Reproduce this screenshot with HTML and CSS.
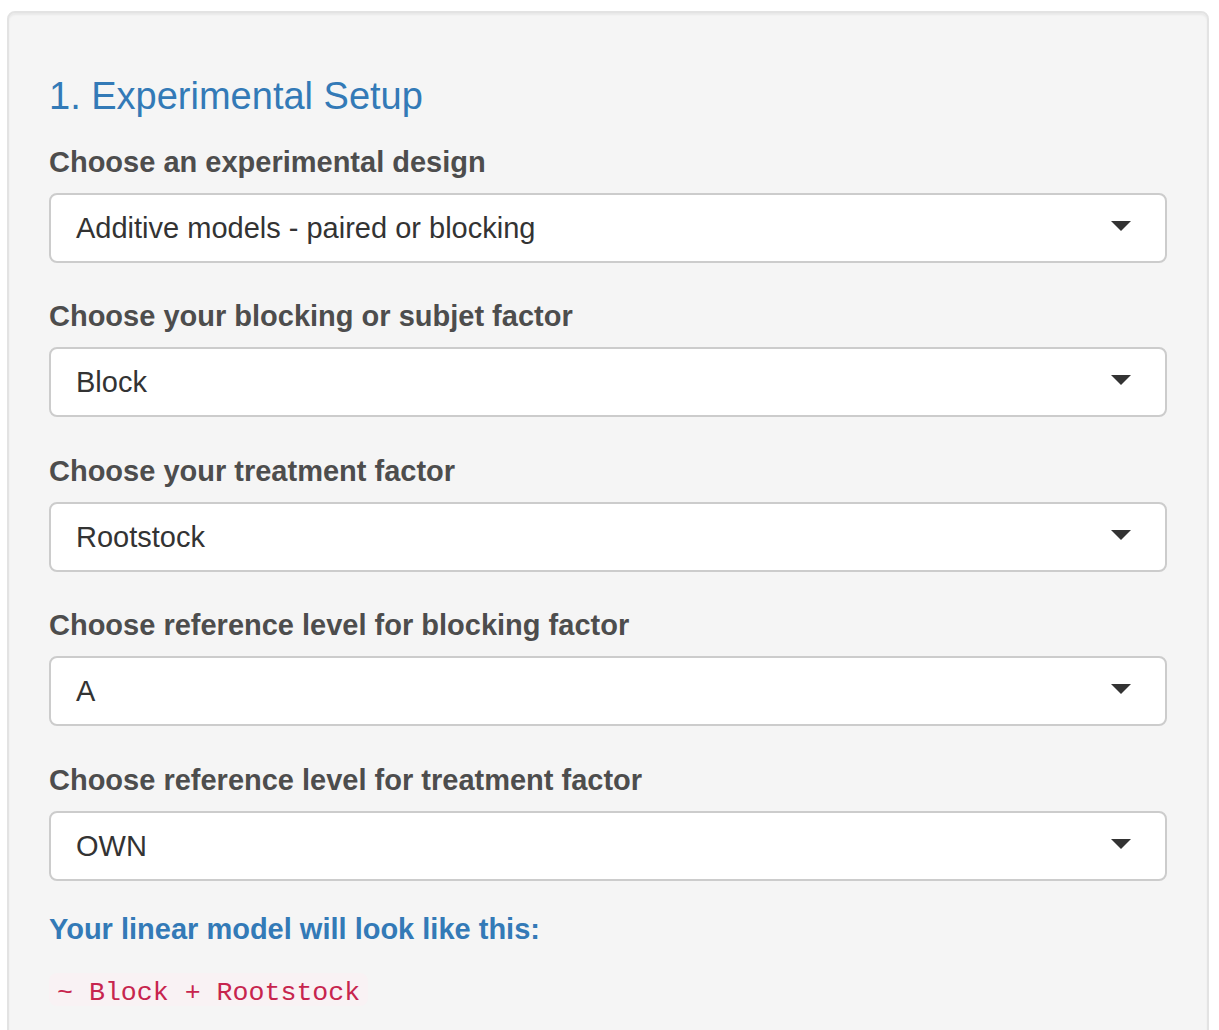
FILE: index.html
```html
<!DOCTYPE html>
<html lang="en">
<head>
<meta charset="utf-8">
<title>Experimental Setup</title>
<link rel="stylesheet" href="styles.css">
</head>
<body>
<div class="well">
  <h3 class="section-title">1. Experimental Setup</h3>
  <div class="form">
    <div class="group">
      <label class="label">Choose an experimental design</label>
      <div class="select"><span class="value">Additive models - paired or blocking</span><span class="caret"></span></div>
    </div>
    <div class="group">
      <label class="label">Choose your blocking or subjet factor</label>
      <div class="select"><span class="value">Block</span><span class="caret"></span></div>
    </div>
    <div class="group">
      <label class="label">Choose your treatment factor</label>
      <div class="select"><span class="value">Rootstock</span><span class="caret"></span></div>
    </div>
    <div class="group">
      <label class="label">Choose reference level for blocking factor</label>
      <div class="select"><span class="value">A</span><span class="caret"></span></div>
    </div>
    <div class="group">
      <label class="label">Choose reference level for treatment factor</label>
      <div class="select"><span class="value">OWN</span><span class="caret"></span></div>
    </div>
  </div>
  <div class="model-title">Your linear model will look like this:</div>
  <div class="model-line"><code class="formula">~ Block + Rootstock</code></div>
</div>
</body>
</html>
```

FILE: styles.css
```css
html, body {
  margin: 0;
  padding: 0;
  background: #ffffff;
}

body {
  padding: 11px 10px 0 7px;
  font-family: "Liberation Sans", Arial, Helvetica, sans-serif;
  color: #333333;
}

.well {
  background: #f5f5f5;
  border: 2px solid #e3e3e3;
  border-radius: 8px;
  box-shadow: inset 0 2px 2px rgba(0, 0, 0, 0.05);
  padding: 38px 40px 60px 40px;
}

.section-title {
  margin: 25px 0 24px 0;
  font-size: 38px;
  line-height: 1.1;
  font-weight: 400;
  color: #337ab7;
}

.form {
  display: flex;
  flex-direction: column;
  gap: 33.5px;
}

.group {
  display: flex;
  flex-direction: column;
}

.label {
  display: block;
  font-size: 29px;
  line-height: 40px;
  font-weight: 700;
  color: #4d4d4d;
  margin-bottom: 11px;
}

.select {
  box-sizing: border-box;
  height: 70px;
  background: #ffffff;
  border: 2px solid #cccccc;
  border-radius: 8px;
  display: flex;
  align-items: center;
  justify-content: space-between;
  padding: 0 34px 0 25px;
}

.value {
  font-size: 29px;
  line-height: 40px;
  color: #333333;
}

.caret {
  width: 0;
  height: 0;
  border-left: 10px solid transparent;
  border-right: 10px solid transparent;
  border-top: 10px solid #333333;
  margin-top: -4px;
}

.model-title {
  margin-top: 28.5px;
  font-size: 29px;
  line-height: 40px;
  font-weight: 700;
  color: #337ab7;
}

.model-line {
  margin-top: 23.5px;
  line-height: 33px;
}

.formula {
  display: inline-block;
  font-family: "Liberation Mono", "Courier New", monospace;
  font-size: 26.6px;
  line-height: 26px;
  padding: 7px 8px 0 8px;
  color: #c7254e;
  background: #f9f2f4;
  border-radius: 8px;
  vertical-align: top;
}
```
